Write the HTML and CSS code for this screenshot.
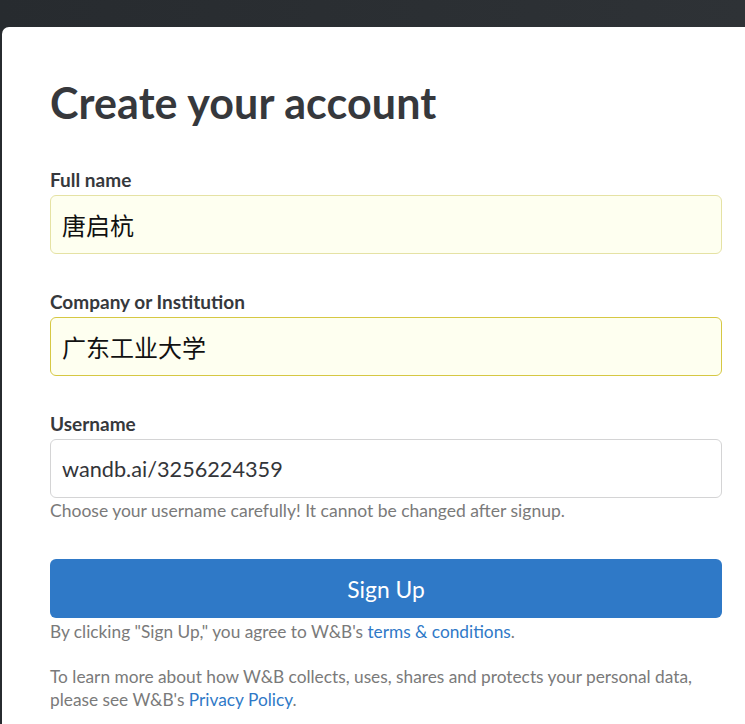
FILE: index.html
```html
<!DOCTYPE html>
<html lang="en">
<head>
<meta charset="utf-8">
<link rel="stylesheet" href="styles.css">
</head>
<body>
<div class="card">
  <h1 class="title">Create your account</h1>
  <div class="field">
    <label class="label">Full name</label>
    <div class="input autofill">唐启杭</div>
  </div>
  <div class="field">
    <label class="label">Company or Institution</label>
    <div class="input autofill focused">广东工业大学</div>
  </div>
  <div class="field">
    <label class="label">Username</label>
    <div class="input plain">wandb.ai/3256224359</div>
    <p class="help">Choose your username carefully! It cannot be changed after signup.</p>
  </div>
  <button class="btn">Sign Up</button>
  <p class="note">By clicking "Sign Up," you agree to W&amp;B's <a class="link">terms &amp; conditions</a>.</p>
  <p class="note privacy">To learn more about how W&amp;B collects, uses, shares and protects your personal data, please see W&amp;B's <a class="link">Privacy Policy</a>.</p>
</div>
</body>
</html>
```

FILE: styles.css
```css
html, body {
  margin: 0;
  padding: 0;
  background: #2a2e32;
  overflow: hidden;
  height: 724px;
}
body {
  font-family: "Lato", "Noto Sans CJK SC", sans-serif;
  background: linear-gradient(90deg, #272b2f, #2e3236);
  padding-top: 27px;
  padding-left: 2px;
  box-sizing: border-box;
}
.card {
  background: #fff;
  border-radius: 7px 0 0 0;
  width: 800px;
  height: 720px;
  padding: 53px 0 0 48px;
  box-sizing: border-box;
}
.title {
  margin: 0 0 43px;
  font-size: 43px;
  line-height: 46px;
  font-weight: 700;
  color: #36383c;
  letter-spacing: 0.1px;
}
.field {
  margin-bottom: 37px;
  width: 672px;
}
.label {
  display: block;
  font-size: 19px;
  line-height: 22px;
  font-weight: 700;
  color: #36383c;
  margin-bottom: 4px;
}
.input {
  height: 59px;
  box-sizing: border-box;
  border: 1px solid #d4d4d5;
  border-radius: 6px;
  padding: 0 11px;
  display: flex;
  align-items: center;
  font-size: 21.7px;
  color: #333539;
}
.autofill {
  background: #fefff0;
  border-color: #e5e2a4;
  font-family: "Noto Sans CJK SC", sans-serif;
  font-size: 24px;
  color: #111;
}
.focused {
  border-color: #d6c843;
}
.plain {
  background: #fff;
}
.help {
  margin: 2px 0 0;
  font-size: 17.5px;
  line-height: 22px;
  color: #7a7a7a;
}
.btn {
  display: block;
  width: 672px;
  height: 59px;
  border: none;
  border-radius: 6px;
  background: #2f79c7;
  color: #fff;
  font-family: "Lato", sans-serif;
  font-size: 22.8px;
  padding: 0;
}
.note {
  margin: 2px 0 0;
  font-size: 17.3px;
  line-height: 23px;
  color: #7a7a7a;
  width: 672px;
}
.privacy {
  margin-top: 22px;
}
.link {
  color: #2f79c7;
}
```
